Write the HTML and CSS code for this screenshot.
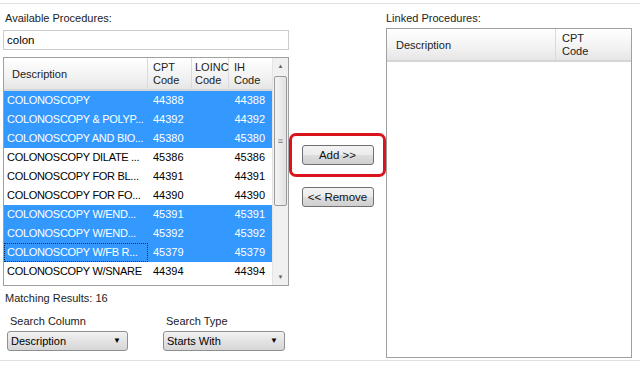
FILE: index.html
```html
<!DOCTYPE html>
<html lang="en">
  <head>
    <meta charset="UTF-8" />
    <title>Procedures</title>
    <link rel="stylesheet" href="styles.css">
  </head>
  <body>
    <div class="page">
      <!-- Available procedures -->
      <div class="left">
        <div class="label">Available Procedures:</div>
        <div class="search">colon</div>
        <div class="grid">
          <div class="grid-main">
            <div class="head">
              <div class="c-desc hd-single">Description</div>
              <div class="c-cpt">CPT<br>Code</div>
              <div class="c-loinc">LOINC<br>Code</div>
              <div class="c-ih">IH<br>Code</div>
            </div>
            <div class="row sel"><div class="c-desc">COLONOSCOPY</div><div class="c-cpt">44388</div><div class="c-loinc"></div><div class="c-ih">44388</div></div>
            <div class="row sel"><div class="c-desc">COLONOSCOPY &amp; POLYP...</div><div class="c-cpt">44392</div><div class="c-loinc"></div><div class="c-ih">44392</div></div>
            <div class="row sel"><div class="c-desc">COLONOSCOPY AND BIO...</div><div class="c-cpt">45380</div><div class="c-loinc"></div><div class="c-ih">45380</div></div>
            <div class="row"><div class="c-desc">COLONOSCOPY DILATE ...</div><div class="c-cpt">45386</div><div class="c-loinc"></div><div class="c-ih">45386</div></div>
            <div class="row"><div class="c-desc">COLONOSCOPY FOR BL...</div><div class="c-cpt">44391</div><div class="c-loinc"></div><div class="c-ih">44391</div></div>
            <div class="row"><div class="c-desc">COLONOSCOPY FOR FO...</div><div class="c-cpt">44390</div><div class="c-loinc"></div><div class="c-ih">44390</div></div>
            <div class="row sel"><div class="c-desc">COLONOSCOPY W/END...</div><div class="c-cpt">45391</div><div class="c-loinc"></div><div class="c-ih">45391</div></div>
            <div class="row sel"><div class="c-desc">COLONOSCOPY W/END...</div><div class="c-cpt">45392</div><div class="c-loinc"></div><div class="c-ih">45392</div></div>
            <div class="row sel"><div class="c-desc focus">COLONOSCOPY W/FB R...</div><div class="c-cpt">45379</div><div class="c-loinc"></div><div class="c-ih">45379</div></div>
            <div class="row"><div class="c-desc">COLONOSCOPY W/SNARE</div><div class="c-cpt">44394</div><div class="c-loinc"></div><div class="c-ih">44394</div></div>
          </div>
          <div class="scroll">
            <div class="arrow">&#9650;</div>
            <div class="track">
              <div class="thumb"><span class="grip">&#8801;</span></div>
            </div>
            <div class="arrow">&#9660;</div>
          </div>
        </div>
        <div class="label results">Matching Results: 16</div>
        <div class="filters">
          <div class="filter">
            <div class="flabel">Search Column</div>
            <div class="combo combo-col">Description<span class="caret">&#9660;</span></div>
          </div>
          <div class="filter">
            <div class="flabel">Search Type</div>
            <div class="combo combo-type">Starts With<span class="caret">&#9660;</span></div>
          </div>
        </div>
      </div>

      <!-- Buttons -->
      <div class="middle">
        <div class="highlight"></div>
        <button class="btn btn-add">Add &gt;&gt;</button>
        <button class="btn">&lt;&lt; Remove</button>
      </div>

      <!-- Linked procedures -->
      <div class="right">
        <div class="label">Linked Procedures:</div>
        <div class="grid linked">
          <div class="head">
            <div class="l-desc hd-single">Description</div>
            <div class="l-cpt">CPT<br>Code</div>
          </div>
        </div>
      </div>
    </div>
  </body>
</html>
```

FILE: styles.css
```css
body {
  margin: 0;
  background: #fff;
  font-family: "Liberation Sans", Arial, sans-serif;
  font-size: 11px;
  color: #000;
}
.page {
  display: flex;
  margin-top: 3px;
  border-top: 1px solid #dde1e1;
  border-bottom: 1px solid #dde1e1;
  height: 358px;
  box-sizing: border-box;
}
.label {
  height: 14px;
  line-height: 14px;
  color: #222;
}
.left {
  width: 286px;
  margin-left: 3px;
  padding-top: 7px;
}
.left > .label {
  padding-left: 2px;
}
.search {
  margin-top: 5px;
  height: 20px;
  border: 1px solid #c9cdd0;
  box-sizing: border-box;
  line-height: 18px;
  padding-left: 3px;
  font-size: 11.5px;
}
.grid {
  margin-top: 7px;
  border: 1px solid #a0a0a0;
  height: 229px;
  box-sizing: border-box;
  display: flex;
  overflow: hidden;
}
.grid-main {
  flex: 1;
}
.head {
  display: flex;
  height: 33px;
  background: linear-gradient(#ffffff, #f2f2f2 60%, #e6e6e6);
  border-bottom: 2px solid #d5d5d5;
  box-sizing: border-box;
  line-height: 13px;
  color: #222;
}
.head > div {
  border-right: 1px solid #dadada;
  padding-top: 3px;
  box-sizing: border-box;
}
.head .hd-single {
  padding-top: 10px;
}
.c-desc { width: 144px; padding-left: 3px; }
.c-cpt { width: 44px; padding-left: 5px; }
.c-loinc { width: 37px; padding-left: 3px; }
.c-ih { width: 43px; padding-left: 5px; }
.head .c-desc { padding-left: 8px; }
.head .c-ih { border-right: none; }
.row {
  display: flex;
  height: 19px;
  line-height: 19px;
  font-size: 11px;
  white-space: nowrap;
}
.row > div {
  box-sizing: border-box;
  overflow: hidden;
}
.row .c-desc {
  letter-spacing: -0.3px;
}
.row .c-ih {
  text-align: right;
  padding-right: 7px;
}
.row.sel {
  background: #3399ff;
  color: #fff;
}
.row .focus {
  outline: 1px dotted #1a2a4a;
  outline-offset: -1px;
}
.scroll {
  width: 16px;
  background: #f0f0f0;
  display: flex;
  flex-direction: column;
  border-left: 1px solid #e4e4e4;
}
.arrow {
  height: 16px;
  font-size: 6px;
  line-height: 16px;
  text-align: center;
  color: #606060;
}
.track {
  flex: 1;
}
.thumb {
  margin: 2px 1px 0;
  height: 128px;
  border: 1px solid #9a9a9a;
  border-radius: 2px;
  background: linear-gradient(90deg, #f4f4f4, #e2e2e2);
  display: flex;
  align-items: center;
  justify-content: center;
}
.grip {
  font-size: 9px;
  color: #777;
}
.results {
  margin-top: 5px;
  padding-left: 2px;
}
.filters {
  display: flex;
  margin-top: 9px;
}
.filter {
  margin-left: 4px;
}
.filter + .filter {
  margin-left: 35px;
}
.flabel {
  padding-left: 3px;
  height: 14px;
  line-height: 14px;
  color: #222;
}
.combo {
  margin-top: 3px;
  height: 20px;
  border: 1px solid #8e8f8f;
  border-radius: 3px;
  background: linear-gradient(#f2f2f2, #e3e3e3 50%, #d6d6d6);
  box-sizing: border-box;
  line-height: 18px;
  padding-left: 3px;
  font-size: 11px;
  position: relative;
}
.combo-col { width: 121px; }
.combo-type { width: 122px; }
.caret {
  position: absolute;
  right: 6px;
  top: 0;
  font-size: 8px;
  color: #000;
}
.middle {
  width: 97px;
  position: relative;
  display: flex;
  flex-direction: column;
  align-items: center;
  padding-top: 141px;
}
.highlight {
  position: absolute;
  left: 0;
  top: 129px;
  width: 97px;
  height: 44px;
  border: 3px solid #d9141c;
  border-radius: 7px;
  box-sizing: border-box;
}
.btn {
  width: 72px;
  height: 20px;
  padding: 0;
  border: 1px solid #707070;
  border-radius: 3px;
  background: linear-gradient(#f3f3f3, #ebebeb 50%, #dddddd 51%, #cfcfcf);
  font-family: inherit;
  font-size: 11.5px;
  color: #111;
}
.btn-add {
  margin-bottom: 22px;
}
.right {
  width: 246px;
  padding-top: 7px;
}
.grid.linked {
  margin-top: 3px;
  height: 330px;
  display: block;
}
.l-desc { width: 169px; padding-left: 9px; }
.l-cpt { padding-left: 6px; border-right: none !important; }
```
